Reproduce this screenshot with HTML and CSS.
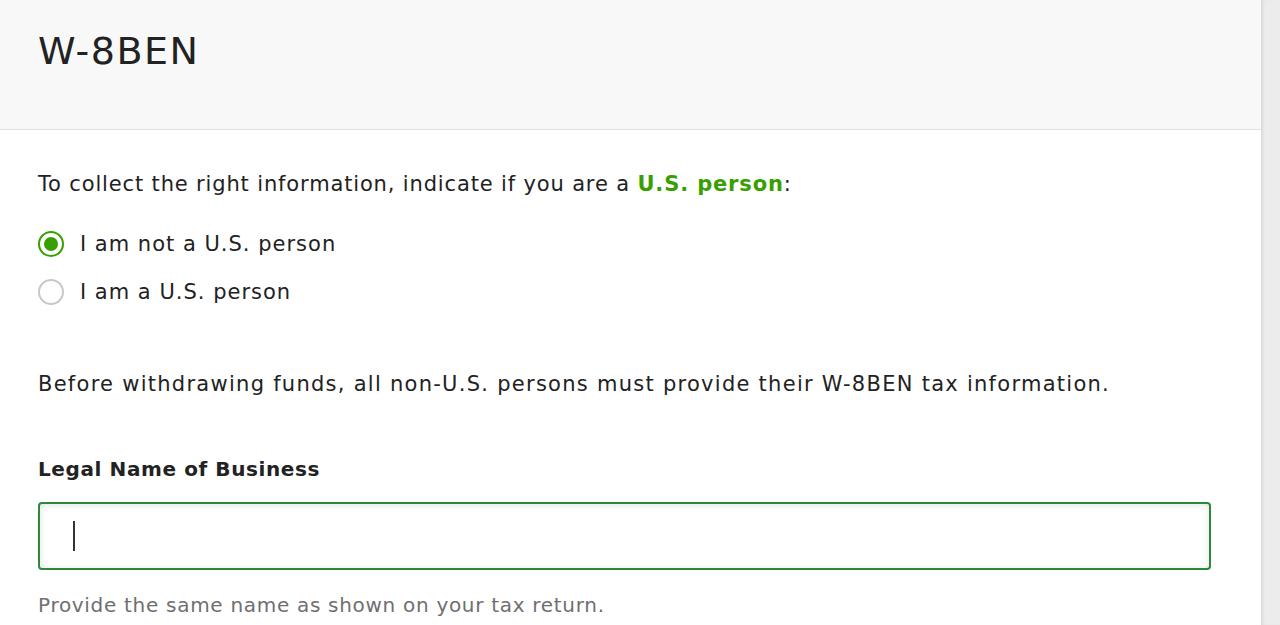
FILE: index.html
```html
<!DOCTYPE html>
<html>
<head>
<meta charset="utf-8">
<link rel="stylesheet" href="styles.css">
</head>
<body>
<div class="page">
  <div class="panel">
    <header class="head">
      <h1 class="title">W-8BEN</h1>
    </header>
    <section class="body">
      <p class="intro">To collect the right information, indicate if you are a <a class="link" href="#">U.S. person</a>:</p>
      <div class="radios">
        <label class="radio"><span class="dot checked"></span><span>I am not a U.S. person</span></label>
        <label class="radio"><span class="dot"></span><span>I am a U.S. person</span></label>
      </div>
      <p class="note">Before withdrawing funds, all non-U.S. persons must provide their W-8BEN tax information.</p>
      <div class="field">
        <div class="label">Legal Name of Business</div>
        <div class="input"><span class="caret"></span></div>
        <div class="help">Provide the same name as shown on your tax return.</div>
      </div>
    </section>
  </div>
  <div class="gutter"></div>
</div>
</body>
</html>
```
FILE: styles.css
```css
html, body { margin: 0; padding: 0; }
body {
  font-family: "DejaVu Sans", sans-serif;
  color: #222;
  background: #fff;
  overflow: hidden;
  height: 625px;
}
.page { display: flex; height: 625px; }
.panel { width: 1261px; background: #fff; }
.gutter {
  flex: 1;
  background: #ececec;
  box-shadow: inset 3px 0 3px -1px rgba(0,0,0,0.08);
}
.head {
  height: 129px;
  background: #f8f8f8;
  border-bottom: 1px solid #e0e0e0;
  padding: 0 38px;
}
.title {
  margin: 0;
  padding-top: 28px;
  font-size: 38px;
  font-weight: 400;
  line-height: 46px;
  letter-spacing: 1.5px;
}
.body { padding: 0 38px; }
.intro {
  margin: 0;
  padding-top: 40px;
  font-size: 21px;
  line-height: 28px;
  letter-spacing: 0.85px;
}
.link { color: #37a000; font-weight: 600; text-decoration: none; }
.radios { margin-top: 32px; display: flex; flex-direction: column; gap: 20px; }
.radio { display: flex; align-items: center; gap: 16px; font-size: 21px; line-height: 28px; letter-spacing: 1px; }
.dot {
  border-radius: 50%;
  border: 2px solid #c8c8c8; box-sizing: border-box;
  display: inline-flex; align-items: center; justify-content: center;
  width: 26px; height: 26px;
}
.dot.checked { border-color: #37a000; }
.dot.checked::after {
  content: ""; width: 14px; height: 14px; border-radius: 50%; background: #37a000;
}
.note { margin: 64px 0 0; font-size: 21px; line-height: 28px; letter-spacing: 1.27px; }
.field { margin-top: 58px; }
.label { font-weight: 700; font-size: 20px; line-height: 26px; letter-spacing: 0.6px; }
.input {
  margin-top: 20px;
  width: 1173px;
  height: 68px;
  box-sizing: border-box;
  border: 2px solid #2a8a3a;
  border-radius: 4px;
  box-shadow: inset 0 1px 6px rgba(0,0,0,0.12);
  display: flex; align-items: center;
  padding-left: 33px;
}
.caret { width: 2px; height: 30px; background: #333; }
.help { margin-top: 22px; font-size: 20px; line-height: 26px; color: #6f6f6f; letter-spacing: 0.7px; }
```
